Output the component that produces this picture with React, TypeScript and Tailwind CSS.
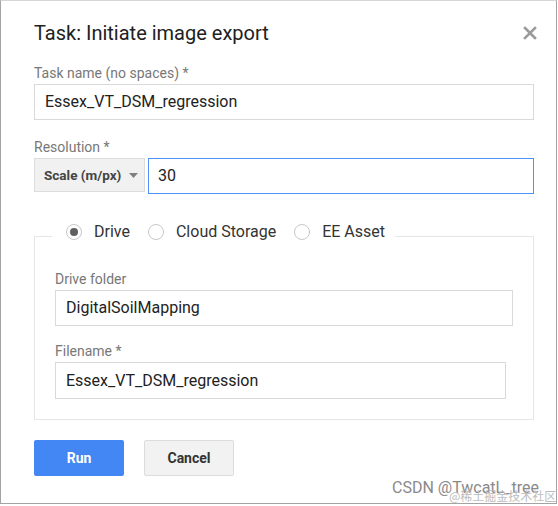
import { memo } from 'react'

function Radio({ label, checked }: { label: string; checked?: boolean }) {
  return (
    <label className="flex items-center gap-[12px]">
      <span className="flex h-[16px] w-[16px] items-center justify-center rounded-full border border-[#c8c8c8] bg-white">
        {checked && <span className="h-[8px] w-[8px] rounded-full bg-[#5f5f5f]"></span>}
      </span>
      <span className="text-[16px] leading-[24px] text-[#333]">{label}</span>
    </label>
  )
}

function ExportDialog() {
  return (
    <div className="relative h-[506px] w-[558px] bg-white font-['Roboto','Liberation_Sans',sans-serif]">
      <div className="h-[504px] w-[557px] border border-[#a3a3a3] border-t-[#d6d6d6] pl-[33px] pr-[21px] pt-[20px]">
        {/* Header */}
        <div className="flex items-center justify-between">
          <h2 className="text-[20px] leading-[24px] text-[#212121]">Task: Initiate image export</h2>
          <svg className="mr-[-2px] h-[14px] w-[14px]" viewBox="0 0 14 14">
            <path d="M2 2 L12 12 M12 2 L2 12" stroke="#9a9a9a" strokeWidth="2.6" strokeLinecap="square" />
          </svg>
        </div>

        {/* Task name */}
        <div className="mt-[20px] text-[14px] leading-[16px] text-[#777]">Task name (no spaces) *</div>
        <div className="mt-[3px] flex h-[36px] w-[500px] items-center border border-[#d9d9d9] pl-[10px] text-[16px] text-[#222]">
          Essex_VT_DSM_regression
        </div>

        {/* Resolution */}
        <div className="mt-[19px] text-[14px] leading-[16px] text-[#777]">Resolution *</div>
        <div className="mt-[3px] flex items-start gap-[3px]">
          <div className="flex h-[34px] w-[111px] shrink-0 items-center justify-between border border-[#dcdcdc] bg-[#f1f1f1] pl-[9px] pr-[6px]">
            <span className="text-[13.5px] font-bold text-[#444]">Scale (m/px)</span>
            <svg className="h-[5px] w-[9px]" viewBox="0 0 9 5">
              <path d="M0 0 L9 0 L4.5 5 Z" fill="#808080" />
            </svg>
          </div>
          <div className="flex h-[36px] w-[386px] shrink-0 items-center border border-[#4d90fe] pl-[9px] text-[16px] text-[#222]">
            30
          </div>
        </div>

        {/* Destination */}
        <fieldset className="mt-[26px] w-[500px] border border-[#e6e6e6] px-[20px] pb-[20px] pt-[19px]">
          <legend className="ml-[-3px] pb-[8px] pl-[14px] pr-[10px]">
            <div className="flex h-[24px] items-center gap-[18px]">
              <Radio label="Drive" checked />
              <Radio label="Cloud Storage" />
              <Radio label="EE Asset" />
            </div>
          </legend>

          <div className="text-[14px] leading-[16px] text-[#777]">Drive folder</div>
          <div className="mt-[3px] flex h-[36px] w-[458px] items-center border border-[#d9d9d9] pl-[10px] text-[16px] text-[#222]">
            DigitalSoilMapping
          </div>

          <div className="mt-[17px] text-[14px] leading-[16px] text-[#777]">Filename *</div>
          <div className="mt-[3px] flex h-[37px] w-[451px] items-center border border-[#d9d9d9] pl-[10px] text-[16px] text-[#222]">
            Essex_VT_DSM_regression
          </div>
        </fieldset>

        {/* Actions */}
        <div className="mt-[20px] flex gap-[20px]">
          <button className="h-[36px] w-[90px] rounded-[2px] bg-[#4387f5] text-[14px] font-bold text-white">Run</button>
          <button className="h-[36px] w-[90px] rounded-[2px] border border-[#dcdcdc] bg-[#f2f2f2] text-[14px] font-bold text-[#333]">
            Cancel
          </button>
        </div>
      </div>

      {/* Watermark */}
      <div className="absolute left-[392px] top-[478px] text-[16px] leading-[20px] text-[#8a8a8a]">CSDN @TwcatL_tree</div>
      <div className="absolute left-[449px] top-[489px] font-['Noto_Sans_CJK_SC',sans-serif] text-[12px] leading-[14px] text-[#bdbdbd]">
        @稀土掘金技术社区
      </div>
    </div>
  )
}

export default memo(ExportDialog)
